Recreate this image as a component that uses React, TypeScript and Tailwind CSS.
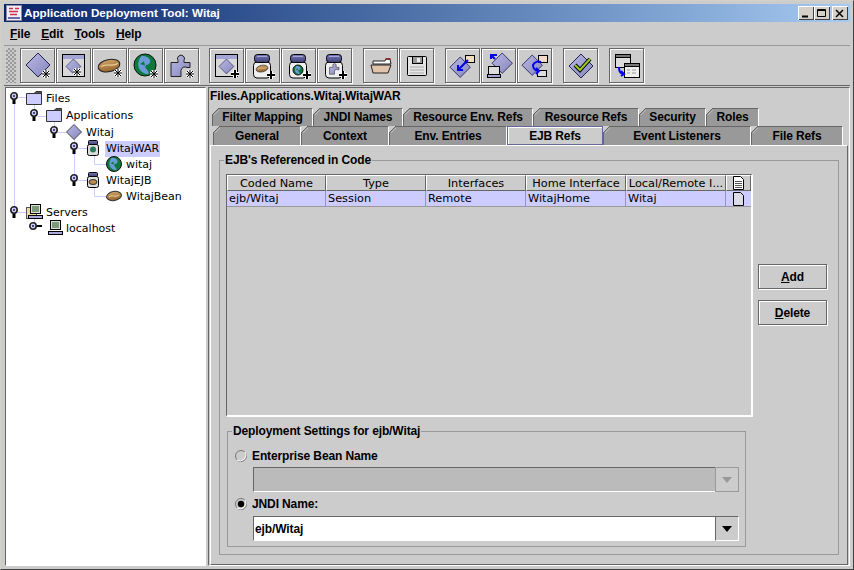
import type { ReactNode } from "react";

const sans = "font-['Liberation_Sans',Arial,sans-serif]";
const lucida = "font-['DejaVu_Sans',sans-serif] tracking-normal";

const Defs = () => (
  <svg width="0" height="0" className="absolute">
    <defs>
      <linearGradient id="lav" x1="0" y1="0" x2="1" y2="1">
        <stop offset="0" stopColor="#b9b9e6" />
        <stop offset="1" stopColor="#8585bb" />
      </linearGradient>
      <linearGradient id="bean" x1="0" y1="0" x2="0" y2="1">
        <stop offset="0" stopColor="#cfa266" />
        <stop offset="1" stopColor="#94642e" />
      </linearGradient>
      <linearGradient id="lid" x1="0" y1="0" x2="0" y2="1">
        <stop offset="0" stopColor="#7a7ab5" />
        <stop offset="1" stopColor="#3f3f78" />
      </linearGradient>
    </defs>
  </svg>
);

const Diamond = ({ x = 0, y = 0, s = 1 }: { x?: number; y?: number; s?: number }) => (
  <g transform={`translate(${x} ${y}) scale(${s})`}>
    <path d="M12 0 24 12 12 24 0 12Z" fill="url(#lav)" stroke="#222255" />
  </g>
);

const Star = ({ x, y }: { x: number; y: number }) => (
  <g fill="none">
    <path d={`M${x - 4} ${y}H${x + 4}M${x} ${y - 4}V${y + 4}M${x - 3} ${y - 3}L${x + 3} ${y + 3}M${x - 3} ${y + 3}L${x + 3} ${y - 3}`} stroke="#fff" strokeWidth="3" />
    <path d={`M${x - 4} ${y}H${x + 4}M${x} ${y - 4}V${y + 4}M${x - 3} ${y - 3}L${x + 3} ${y + 3}M${x - 3} ${y + 3}L${x + 3} ${y - 3}`} stroke="#000" />
  </g>
);

const Plus = ({ x, y }: { x: number; y: number }) => (
  <g fill="none">
    <path d={`M${x - 4} ${y}H${x + 4}M${x} ${y - 4}V${y + 4}`} stroke="#fff" strokeWidth="4" />
    <path d={`M${x - 4} ${y}H${x + 4}M${x} ${y - 4}V${y + 4}`} stroke="#000" strokeWidth="2" />
  </g>
);

const Bean = ({ x, y, s = 1 }: { x: number; y: number; s?: number }) => (
  <g transform={`translate(${x} ${y}) scale(${s})`}>
    <ellipse cx="10" cy="6" rx="10" ry="5.5" transform="rotate(-12 10 6)" fill="url(#bean)" stroke="#222" />
    <path d="M3 7C7 3 13 8 18 4" stroke="#ecd6a0" fill="none" />
  </g>
);

const Globe = ({ x, y, r = 11 }: { x: number; y: number; r?: number }) => (
  <g>
    <circle cx={x} cy={y} r={r} fill="#0d7a3c" stroke="#111" />
    <path
      d={`M${x - r * 0.3} ${y - r * 0.85}C${x + r * 0.6} ${y - r * 0.8} ${x + r * 0.7} ${y - r * 0.1} ${x + r * 0.1} ${y}C${x - r * 0.2} ${y + r * 0.3} ${x + r * 0.5} ${y + r * 0.5} ${x + r * 0.3} ${y + r * 0.85}C${x - r * 0.6} ${y + r * 0.7} ${x - r * 0.9} ${y - r * 0.1} ${x - r * 0.3} ${y - r * 0.85}Z`}
      fill="#6a9ad8"
    />
    <path d={`M${x - r * 0.45} ${y - r * 0.1}l${r * 0.35} ${-r * 0.25}l${r * 0.1} ${r * 0.4}z`} fill="#0d7a3c" />
  </g>
);

const Jar = ({ children }: { children?: ReactNode }) => (
  <g>
    <rect x="4.500" y="10" width="17" height="16" rx="3.500" fill="#efefef" stroke="#000" />
    <rect x="5.500" y="2.500" width="15" height="8" rx="3" fill="url(#lid)" stroke="#000" />
    <path d="M8 4.500h10" stroke="#a8a8dd" />
    {children}
  </g>
);

const WindowIcon = ({ mark }: { mark: ReactNode }) => (
  <>
    <rect x="2.500" y="2.500" width="22" height="22" fill="#d8d8d8" stroke="#000" />
    <rect x="3" y="3" width="21" height="4" fill="#a5a5d5" />
    <Diamond x={6} y={7} s={0.62} />
    {mark}
  </>
);

const Puzzle = ({ x = 0, y = 0, s = 1 }: { x?: number; y?: number; s?: number }) => (
  <path
    transform={`translate(${x} ${y}) scale(${s})`}
    d="M3 10.500h7V8.500a3.500 3.500 0 1 1 6 0v2h6v5h-3a4 4 0 0 0-6 3v6H3Z"
    fill="url(#lav)"
    stroke="#222"
  />
);

const Arrow = ({ d }: { d: string }) => <path d={d} stroke="#0000ee" strokeWidth="2" fill="none" />;

const Paper = ({ x, y }: { x: number; y: number }) => (
  <rect x={x + 0.5} y={y + 0.5} width="9" height="7" fill="#f0dcc0" stroke="#000" />
);

const toolbar: { gap: number; icon: ReactNode }[] = [
  { gap: 0, icon: <><Diamond x={2} y={1} /><Star x={22} y={22} /></> },
  { gap: 1, icon: <WindowIcon mark={<Star x={17} y={20} />} /> },
  { gap: 1, icon: <><Bean x={2} y={7} s={1.1} /><Star x={22} y={21} /></> },
  { gap: 1, icon: <><Globe x={13} y={13} /><Star x={22} y={22} /></> },
  { gap: 1, icon: <><Puzzle /><Star x={22} y={22} /></> },
  { gap: 10, icon: <WindowIcon mark={<Plus x={22} y={22} />} /> },
  { gap: 1, icon: <Jar><Bean x={7} y={13} s={0.6} /><Plus x={22} y={23} /></Jar> },
  { gap: 1, icon: <Jar><Globe x={13} y={18} r={5} /><Plus x={22} y={23} /></Jar> },
  { gap: 1, icon: <Jar><Puzzle x={7} y={10} s={0.5} /><Plus x={22} y={23} /></Jar> },
  {
    gap: 11,
    icon: (
      <>
        <path d="M6 12V9h12l1-2h4l1 5Z" fill="#fff" stroke="#222" />
        <path d="M18.500 7h5" stroke="#8a3030" strokeWidth="2" />
        <path d="M4 13h20l-3 8H6Z" fill="#e0c4ac" stroke="#222" />
      </>
    ),
  },
  {
    gap: 1,
    icon: (
      <>
        <rect x="4.500" y="4.500" width="19" height="19" rx="1" fill="#e4e4e4" stroke="#000" />
        <rect x="9.500" y="4.500" width="10" height="7" fill="#999" stroke="#000" />
        <rect x="14" y="6" width="3" height="4" fill="#eee" />
        <path d="M7 15h14M7 18h14M7 21h14" stroke="#aaa" />
      </>
    ),
  },
  {
    gap: 11,
    icon: (
      <>
        <Diamond x={1} y={5} s={0.85} />
        <Paper x={16} y={3} />
        <Arrow d="M19 8 9 18M9 13v5h5" />
      </>
    ),
  },
  {
    gap: 1,
    icon: (
      <>
        <Diamond x={7} y={1} s={0.85} />
        <rect x="3.500" y="14.500" width="11" height="8" fill="#ddd" stroke="#000" />
        <rect x="2.500" y="22.500" width="13" height="3" fill="#a5a5d5" stroke="#000" />
        <Arrow d="M12 3H6v4M6 3l4 4" />
      </>
    ),
  },
  {
    gap: 1,
    icon: (
      <>
        <Diamond x={1} y={3} s={0.85} />
        <Paper x={17} y={3} />
        <rect x="16.500" y="18.500" width="9" height="6" fill="#ddd" stroke="#000" />
        <Arrow d="M20 10a6 6 0 0 0-8 3c0 4 3 6 6 6M15 16l3 3-3 3" />
      </>
    ),
  },
  {
    gap: 11,
    icon: (
      <>
        <Diamond x={2} y={2} />
        <path d="M8 13l5 5 10-11" stroke="#000" strokeWidth="4" fill="none" />
        <path d="M8 13l5 5 10-11" stroke="#9acc22" strokeWidth="2" fill="none" />
      </>
    ),
  },
  {
    gap: 11,
    icon: (
      <>
        <rect x="2.500" y="2.500" width="15" height="13" fill="#ddd" stroke="#000" />
        <rect x="2.500" y="2.500" width="15" height="3" fill="#777" stroke="#000" />
        <rect x="11.500" y="11.500" width="15" height="14" fill="#eee" stroke="#000" />
        <rect x="11.500" y="11.500" width="15" height="3" fill="#777" stroke="#000" />
        <path d="M14 18h3M19 18h4M14 21h3M19 21h4" stroke="#999" />
        <Arrow d="M6 15c0 5 2 7 5 7M8 19l3 3-3 2" />
      </>
    ),
  },
];

const treeFolder = (
  <svg width="16" height="14" viewBox="0 0 16 14">
    <path d="M.5 2.500h15v11H.5Z" fill="#ccccff" stroke="#333" />
    <path d="M8 2.500 10 .5h5.500v2Z" fill="#555" stroke="#333" />
  </svg>
);
const treeDiamond = (
  <svg width="16" height="16" viewBox="0 0 16 16">
    <path d="M8 .5 15.500 8 8 15.500.5 8Z" fill="url(#lav)" stroke="#444" />
  </svg>
);
const treeJar = (inner: ReactNode) => (
  <svg width="14" height="16" viewBox="0 0 14 16">
    <rect x="1.500" y="4.500" width="11" height="11" rx="2" fill="#ddd" stroke="#000" />
    <rect x="2.500" y=".5" width="9" height="4" rx="1" fill="url(#lid)" stroke="#000" />
    {inner}
  </svg>
);
const treeGlobe = (
  <svg width="16" height="16" viewBox="0 0 16 16">
    <Globe x={8} y={8} r={7.500} />
  </svg>
);
const treeBean = (
  <svg width="16" height="12" viewBox="0 0 16 12">
    <ellipse cx="8" cy="6" rx="7.500" ry="4.500" transform="rotate(-10 8 6)" fill="url(#bean)" stroke="#333" />
    <path d="M3 7c3-3 6 1 10-2" stroke="#ecd6a0" fill="none" />
  </svg>
);
const treeMonitor = (folder: boolean) => (
  <svg width="18" height="16" viewBox="0 0 18 16">
    {folder ? <rect x=".5" y="3.500" width="10" height="11" fill="#f2dc9a" stroke="#555" /> : null}
    <rect x="4.500" y=".5" width="10" height="9" fill="#ddd" stroke="#000" />
    <rect x="6" y="2" width="7" height="6" fill="#7a9a7a" />
    <rect x="2.500" y="11.500" width="14" height="3" fill="#a9a9dd" stroke="#000" />
  </svg>
);

const Handle = () => (
  <svg width="12" height="14" viewBox="0 0 12 14" className="shrink-0">
    <path d="M6 8v5" stroke="#000" strokeWidth="3" />
    <circle cx="6" cy="5" r="3.200" fill="#ccccff" stroke="#222" strokeWidth="1.600" />
    <circle cx="6" cy="5" r="1" fill="#224" />
  </svg>
);

const ClosedHandle = () => (
  <svg width="14" height="10" viewBox="0 0 14 10" className="shrink-0 -mt-[4px]">
    <path d="M8 5h6" stroke="#000" strokeWidth="2" />
    <circle cx="5" cy="5" r="3.200" fill="#ccccff" stroke="#222" strokeWidth="1.600" />
    <circle cx="5" cy="5" r="1" fill="#224" />
  </svg>
);

const tree = [
  { pad: 2, h: 16, label: "Files", icon: treeFolder, handle: true },
  { pad: 22, h: 18, label: "Applications", icon: treeFolder, handle: true },
  { pad: 42, h: 16, label: "Witaj", icon: treeDiamond, handle: true },
  { pad: 62, h: 16, label: "WitajWAR", icon: treeJar(<circle cx="7" cy="9.500" r="3" fill="#2a7a5a" />), handle: true, selected: true },
  { pad: 82, h: 16, label: "witaj", icon: treeGlobe },
  { pad: 62, h: 16, label: "WitajEJB", icon: treeJar(<ellipse cx="7" cy="10" rx="4" ry="2.500" fill="#b98a4a" stroke="#333" />), handle: true },
  { pad: 82, h: 16, label: "WitajBean", icon: treeBean },
  { pad: 2, h: 16, label: "Servers", icon: treeMonitor(true), handle: true },
  { pad: 22, h: 16, label: "localhost", icon: treeMonitor(false), closed: true },
];

const tabsTop = [
  { label: "Filter Mapping", w: 101 },
  { label: "JNDI Names", w: 90 },
  { label: "Resource Env. Refs", w: 130 },
  { label: "Resource Refs", w: 106 },
  { label: "Security", w: 67 },
  { label: "Roles", w: 53 },
];
const tabsBottom = [
  { label: "General", w: 88 },
  { label: "Context", w: 88 },
  { label: "Env. Entries", w: 118 },
  { label: "EJB Refs", w: 96, active: true },
  { label: "Event Listeners", w: 148 },
  { label: "File Refs", w: 92 },
];

const Tab = ({ label, w, active, raise }: { label: string; w: number; active?: boolean; raise?: boolean }) => (
  <div
    style={{ width: w }}
    className={`relative flex h-full items-center justify-center font-bold text-black ${raise ? "pb-[2px]" : ""} ${
      active
        ? "border border-[#666699] bg-[#cccccc] shadow-[inset_1px_1px_0_#fff]"
        : "border-t border-l border-r border-t-[#666] border-l-[#666] border-r-[#fff] bg-[#999999]"
    }`}
  >
    {active ? null : (
      <svg width="8" height="8" viewBox="0 0 8 8" className="absolute -top-px -left-px">
        <path d="M0 0h7L0 7Z" fill="#cccccc" />
        <path d="M0 7 7 0" stroke="#666" />
        <path d="M2 7 7 2" stroke="#bbb" />
      </svg>
    )}
    {label}
  </div>
);

const columns = [
  { label: "Coded Name", w: 99, cell: "ejb/Witaj" },
  { label: "Type", w: 100, cell: "Session" },
  { label: "Interfaces", w: 100, cell: "Remote" },
  { label: "Home Interface", w: 100, cell: "WitajHome" },
  { label: "Local/Remote I...", w: 100, cell: "Witaj" },
];

const DocIcon = ({ lines }: { lines?: boolean }) => (
  <svg width="11" height="14" viewBox="0 0 11 14">
    <path d="M.5.500h7l3 3v10H.500Z" fill={lines ? "#fff" : "#dcdce8"} stroke="#000" />
    {lines ? <path d="M2 5.500h7M2 7.500h7M2 9.500h7M2 11.500h7" stroke="#555" /> : null}
  </svg>
);

const Combo = ({ disabled, value }: { disabled?: boolean; value?: string }) => (
  <div
    className={`ml-[25px] mr-[6px] flex h-[25px] border-t border-l border-b border-t-[#666] border-l-[#666] border-b-[#fff] ${
      disabled ? "bg-[#bbbbbb]" : "bg-white"
    }`}
  >
    <div className="flex flex-1 items-center pl-[1px] font-bold text-black">{value}</div>
    <div
      className={`-mt-px -mb-px flex w-[24px] items-center justify-center bg-[#cccccc] ${
        disabled
          ? "border border-[#999]"
          : "border border-t-[#666] border-l-[#666] border-r-[#fff] border-b-[#fff]"
      }`}
    >
      <svg width="10" height="6" viewBox="0 0 10 6">
        <path d="M0 0h10L5 6Z" fill={disabled ? "#999" : "#000"} />
      </svg>
    </div>
  </div>
);

const Radio = ({ label, checked }: { label: string; checked?: boolean }) => (
  <div className="ml-[6px] flex h-[22px] items-center gap-[4px] font-bold text-black">
    <svg width="14" height="14" viewBox="0 0 14 14">
      <circle cx="7" cy="7" r="5.500" fill="#ccc" stroke="#777" />
      <path d="M11 3a5.800 5.800 0 0 1-8 8" fill="none" stroke="#fff" />
      {checked ? <circle cx="7" cy="7" r="3.200" fill="#000" /> : null}
    </svg>
    {label}
  </div>
);

const SideButton = ({ first, rest }: { first: string; rest: string }) => (
  <button
    type="button"
    className="flex h-[25px] w-[69px] items-center justify-center border border-[#666] bg-[#cccccc] font-bold text-black shadow-[1px_1px_0_#fff,inset_1px_1px_0_#fff]"
  >
    <span className="underline">{first}</span>
    {rest}
  </button>
);

export default function App() {
  return (
    <div className={`flex h-[570px] w-[854px] flex-col overflow-hidden border border-t-[#d4d0c8] border-l-[#d4d0c8] border-r-[#404040] border-b-[#404040] bg-[#cccccc] p-[3px] text-[12px] tracking-[-0.12px] ${sans}`}>
      <Defs />
      {/* title bar */}
      <div className="flex h-[18px] shrink-0 items-center bg-gradient-to-r from-[#0a246a] to-[#a6caf0] px-[2px]">
        <svg width="16" height="16" viewBox="0 0 16 16" className="shrink-0">
          <rect x=".5" y=".5" width="15" height="15" fill="#f4eef4" stroke="#8a8aa8" />
          <path d="M3 3.500h4M9 3.500h4M3 6.500h9M4 9.500h7" stroke="#d03050" strokeWidth="1.500" />
          <path d="M2 13h12" stroke="#6a6aa8" strokeWidth="2" />
        </svg>
        <span className="ml-[2px] flex-1 text-[11.700px] font-bold tracking-normal text-white">
          Application Deployment Tool: Witaj
        </span>
        {["min", "max", "close"].map((kind) => (
          <div
            key={kind}
            className={`flex h-[14px] w-[16px] items-center justify-center bg-[#d4d0c8] shadow-[inset_1px_1px_0_#fff,inset_-1px_-1px_0_#404040] ${kind === "close" ? "ml-[2px]" : ""}`}
          >
            <svg width="10" height="9" viewBox="0 0 10 9">
              {kind === "min" ? <path d="M1 7.500h6" stroke="#000" strokeWidth="2" /> : null}
              {kind === "max" ? <path d="M.5.500h8v7h-8ZM.5 1.500h8" fill="none" stroke="#000" /> : null}
              {kind === "close" ? <path d="M1 1l7 7M8 1 1 8" stroke="#000" strokeWidth="1.500" /> : null}
            </svg>
          </div>
        ))}
      </div>

      {/* menu bar */}
      <div className="flex h-[23px] shrink-0 items-center gap-[11px] pl-[6px] font-bold text-black">
        {["File", "Edit", "Tools", "Help"].map((item) => (
          <span key={item}>
            <span className="underline">{item[0]}</span>
            {item.slice(1)}
          </span>
        ))}
      </div>

      {/* tool bar */}
      <div className="flex h-[41px] shrink-0 items-center border-t border-b border-t-[#999] border-b-[#666] pl-[2px]">
        <div className="mr-[4px] h-[35px] w-[10px] bg-[repeating-conic-gradient(#999_0_25%,#cccccc_0_50%)] bg-[length:4px_4px]" />
        {toolbar.map((tool, i) => (
          <div
            key={i}
            style={{ marginLeft: tool.gap }}
            className="flex h-[35px] w-[35px] shrink-0 items-center justify-center border border-[#666] shadow-[1px_1px_0_#fff,inset_1px_1px_0_#fff]"
          >
            <svg width="28" height="28" viewBox="0 0 28 28">
              {tool.icon}
            </svg>
          </div>
        ))}
      </div>

      {/* split area */}
      <div className="flex min-h-0 flex-1 pt-[1px]">
        <div className="relative ml-[1px] mr-[2px] w-[201px] shrink-0 border border-t-[#666] border-l-[#666] border-r-[#fff] border-b-[#fff] bg-white pt-[2px]">
          <svg width="199" height="200" viewBox="6 88 199 200" className="absolute top-0 left-0">
            <path
              d="M14.500 97V212M18 97.500H26M18 212.500H26M34.500 105V116M38 116.500H46M54.500 122V132M58 132.500H66M74.500 138V180M78 148.500H88M78 180.500H88M94.500 155V164.500H106M94.500 187V196.500H106M34.500 218V228"
              stroke="#ccccff"
              fill="none"
            />
          </svg>
          <div className="relative">
            {tree.map((node) => (
              <div key={node.label} style={{ paddingLeft: node.pad, height: node.h }} className="flex items-center">
                <div className="flex h-full w-[18px] shrink-0 items-center">
                  {node.closed ? <ClosedHandle /> : node.handle ? <Handle /> : null}
                </div>
                <div className="flex w-[18px] shrink-0 justify-start">{node.icon}</div>
                <span className={`mt-[2px] ml-[1px] px-[1px] text-[11px] leading-[16px] text-black ${lucida} ${node.selected ? "bg-[#ccccff]" : ""}`}>
                  {node.label}
                </span>
              </div>
            ))}
          </div>
        </div>

        <div className="flex min-w-0 flex-1 flex-col border border-t-[#666] border-l-[#666] border-r-[#fff] border-b-[#fff]">
          <div className="h-[20px] shrink-0 pl-[1px] leading-[16px] font-bold text-black">
            Files.Applications.Witaj.WitajWAR
          </div>
          <div className="flex h-[18px] shrink-0 pl-[3px]">
            {tabsTop.map((tab) => (
              <Tab key={tab.label} {...tab} raise />
            ))}
          </div>
          <div className="flex h-[19px] shrink-0 pl-[4px]">
            {tabsBottom.map((tab) => (
              <Tab key={tab.label} {...tab} />
            ))}
          </div>

          <div className="ml-[1px] mr-[1px] flex min-h-0 flex-1 flex-col border border-t-[#fff] border-l-[#fff] border-r-[#666] border-b-[#666] pt-[14px] pr-[8px] pb-[9px] pl-[8px]">
            <div className="relative flex min-h-0 flex-1 flex-col border border-[#999] pt-[13px] pr-[8px] pb-[7px] pl-[6px]">
              <span className="absolute -top-[8px] left-[4px] bg-[#cccccc] px-[1px] leading-[15px] font-bold text-black">
                EJB's Referenced in Code
              </span>
              <div className="flex">
                <div className="h-[243px] w-[527px] border-t border-r-2 border-b-2 border-l border-t-[#666] border-r-[#fff] border-b-[#fff] border-l-[#666]">
                  <div className="flex h-[16px]">
                    {columns.map((col) => (
                      <div
                        key={col.label}
                        style={{ width: col.w }}
                        className={`flex items-center justify-center truncate border border-t-[#fff] border-r-[#666] border-b-[#666] border-l-[#fff] pt-[2px] text-[11.300px] text-black ${lucida}`}
                      >
                        {col.label}
                      </div>
                    ))}
                    <div className="flex w-[25px] items-center justify-center border border-t-[#fff] border-r-[#666] border-b-[#666] border-l-[#fff]">
                      <DocIcon lines />
                    </div>
                  </div>
                  <div className="flex h-[16px] border-b border-b-[#999] bg-[#ccccff]">
                    {columns.map((col) => (
                      <div
                        key={col.label}
                        style={{ width: col.w }}
                        className={`flex items-center border-r border-r-[#999] pt-[2px] pl-[2px] text-[11.300px] text-black ${lucida}`}
                      >
                        {col.cell}
                      </div>
                    ))}
                    <div className="flex w-[25px] items-center justify-center">
                      <DocIcon />
                    </div>
                  </div>
                </div>
                <div className="ml-[5px] flex flex-col gap-[11px] pt-[90px]">
                  <SideButton first="A" rest="dd" />
                  <SideButton first="D" rest="elete" />
                </div>
              </div>

              <div className="relative mt-[14px] ml-[1px] w-[519px] border border-[#999] pt-[13px] pb-[5px]">
                <span className="absolute -top-[8px] left-[4px] bg-[#cccccc] px-[1px] leading-[15px] font-bold text-black">
                  Deployment Settings for ejb/Witaj
                </span>
                <Radio label="Enterprise Bean Name" />
                <Combo disabled />
                <div className="h-[1px]" />
                <Radio label="JNDI Name:" checked />
                <div className="h-[1px]" />
                <Combo value="ejb/Witaj" />
              </div>
            </div>
          </div>
        </div>
      </div>
    </div>
  );
}
